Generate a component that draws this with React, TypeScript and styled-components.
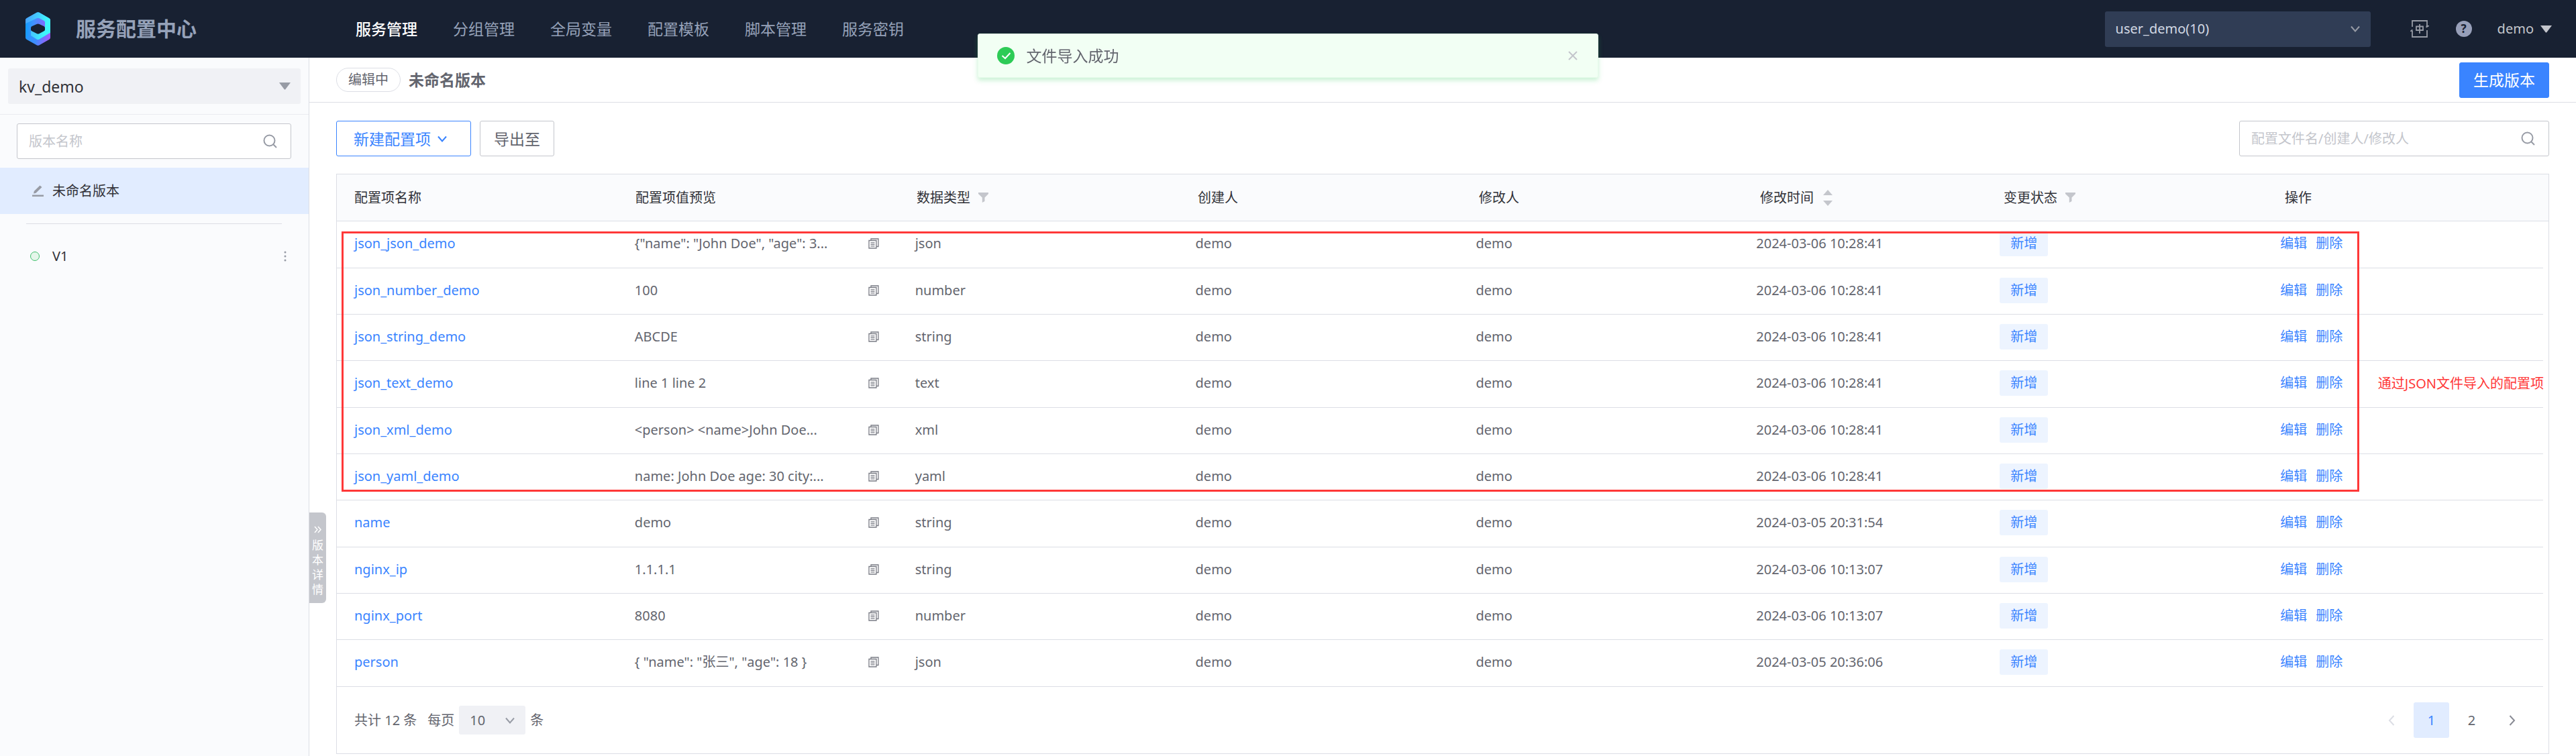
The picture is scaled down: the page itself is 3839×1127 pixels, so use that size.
import React from 'react';
import styled, { createGlobalStyle, css } from 'styled-components';

const GlobalStyle = createGlobalStyle`
  *, *::before, *::after { box-sizing: border-box; }
  body {
    margin: 0;
    background: #ffffff;
    color: #63656e;
    font-family: "Noto Sans", "Noto Sans CJK SC", sans-serif;
    font-size: 20px;
    line-height: 30px;
  }
  button, input, select { font: inherit; color: inherit; margin: 0; }
  button { cursor: pointer; background: none; border: 0; padding: 0; }
  a { text-decoration: none; }
  svg { display: block; flex: none; }
`;

const Page = styled.div`
  display: flex;
  flex-direction: column;
  min-height: 100vh;
`;

/* ---------- header ---------- */

const Header = styled.header`
  display: flex;
  align-items: center;
  height: 86px;
  padding: 0 36px 0 38px;
  background: #182132;
  color: #96a2b9;
`;

const Brand = styled.div`
  display: flex;
  align-items: center;
  gap: 38px;
  width: 492px;
`;

const BrandName = styled.h1`
  margin: 0;
  font-size: 30px;
  line-height: 40px;
  font-weight: 700;
`;

const Nav = styled.nav`
  display: flex;
  flex: 1;
  gap: 53px;
`;

const NavLink = styled.a<{ $active?: boolean }>`
  font-size: 23px;
  color: ${(p) => (p.$active ? '#ffffff' : '#96a2b9')};
  font-weight: ${(p) => (p.$active ? 500 : 400)};
`;

const HeaderTools = styled.div`
  display: flex;
  align-items: center;
`;

const IconButton = styled.button<{ $gap: number }>`
  display: flex;
  margin-left: ${(p) => p.$gap}px;
`;

const HelpBadge = styled.span`
  width: 24px;
  height: 24px;
  border-radius: 50%;
  background: #979fb9;
  color: #182132;
  font-size: 17px;
  line-height: 24px;
  font-weight: 700;
  text-align: center;
`;

const UserButton = styled.button`
  display: flex;
  align-items: center;
  gap: 10px;
  margin-left: 38px;
  color: #c4c6cc;
`;

/* ---------- selects and search boxes ---------- */

const SelectBox = styled.div<{ $kind: 'user' | 'app' | 'page' }>`
  display: grid;
  align-items: center;
  border-radius: 3px;

  > * { grid-area: 1 / 1; }
  > svg { justify-self: end; pointer-events: none; }
  > select {
    width: 100%;
    height: 100%;
    padding: 0 16px;
    border: 0;
    outline: 0;
    background: transparent;
    appearance: none;
  }

  ${(p) => p.$kind === 'user' && css`
    width: 396px;
    height: 53px;
    background: #303d55;
    color: #d3d9e4;
    > svg { margin-right: 15px; }
  `}
  ${(p) => p.$kind === 'app' && css`
    height: 53px;
    background: #f0f1f5;
    color: #313238;
    font-size: 23px;
    > svg { margin-right: 15px; }
  `}
  ${(p) => p.$kind === 'page' && css`
    width: 99px;
    height: 43px;
    background: #f0f1f5;
    > svg { margin-right: 15px; }
  `}
`;

const SearchBox = styled.label<{ $wide?: boolean }>`
  display: flex;
  align-items: center;
  height: 53px;
  width: ${(p) => (p.$wide ? '462px' : 'auto')};
  padding: 0 20px 0 17px;
  background: #ffffff;
  border: 1px solid #c4c6cc;
  border-radius: 3px;

  input {
    flex: 1;
    min-width: 0;
    padding: 0;
    border: 0;
    outline: 0;
    background: transparent;
  }
  input::placeholder { color: #c4c6cc; opacity: 1; }
`;

/* ---------- sidebar ---------- */

const Body = styled.div`
  display: flex;
  flex: 1;
`;

const Sidebar = styled.aside`
  width: 461px;
  flex: none;
  background: #fafbfd;
  border-right: 1px solid #dcdee5;
`;

const AppPicker = styled.div`
  padding: 16px 12px 15px;
  border-bottom: 1px solid #eaebf0;
`;

const VersionSearch = styled.div`
  padding: 13px 26px 13px 25px;
`;

const VersionItem = styled.a<{ $active?: boolean }>`
  display: flex;
  align-items: center;
  height: 69px;
  padding: 0 33px 0 45px;
  gap: 12px;
  color: #313238;
  background: ${(p) => (p.$active ? '#e1ecff' : 'transparent')};

  > span:nth-of-type(2) { flex: 1; }
`;

const VersionMark = styled.span`
  display: flex;
  width: 21px;
`;

const Dot = styled.i`
  width: 14px;
  height: 14px;
  border: 1px solid #3fc06d;
  border-radius: 50%;
  background: #e5f6ea;
`;

const VersionDivider = styled.hr`
  height: 1px;
  margin: 14px 40px 13px 39px;
  border: 0;
  background: #dcdee5;
`;

/* ---------- main ---------- */

const Main = styled.main`
  position: relative;
  flex: 1;
  min-width: 0;
`;

const DetailTab = styled.button`
  position: absolute;
  left: 0;
  top: 678px;
  display: flex;
  flex-direction: column;
  align-items: center;
  width: 25px;
  height: 135px;
  padding-top: 20px;
  gap: 7px;
  border-radius: 0 6px 6px 0;
  background: #c4c6cc;
  color: #ffffff;
  font-size: 17px;
  line-height: 22px;

  span { width: 17px; }
`;

const VersionHeader = styled.div`
  display: flex;
  align-items: center;
  height: 67px;
  padding: 0 40px;
  border-bottom: 1px solid #dcdee5;
`;

const StatusTag = styled.span`
  height: 36px;
  padding: 0 17px;
  border: 1px solid #dcdee5;
  border-radius: 18px;
  line-height: 34px;
`;

const VersionTitle = styled.h2`
  flex: 1;
  margin: 0 0 0 12px;
  font-size: 23px;
  line-height: 30px;
  font-weight: 700;
`;

const Button = styled.button<{ $kind?: 'primary' | 'outline' }>`
  display: flex;
  align-items: center;
  height: 53px;
  padding: 0 20px;
  border: 1px solid #c4c6cc;
  border-radius: 3px;
  font-size: 23px;

  ${(p) => p.$kind === 'primary' && css`
    border-color: #3a84ff;
    background: #3a84ff;
    color: #ffffff;
  `}
  ${(p) => p.$kind === 'outline' && css`
    gap: 9px;
    padding: 0 34px 0 25px;
    border-color: #3a84ff;
    color: #3a84ff;
  `}
`;

const Toolbar = styled.div`
  display: flex;
  gap: 13px;
  padding: 27px 40px 26px;

  > label { margin-left: auto; }
`;

const TablePanel = styled.section`
  position: relative;
  margin: 0 40px;
  border: 1px solid #dcdee5;
`;

const Table = styled.table`
  display: block;

  thead, tbody { display: block; }
  tbody { padding-right: 8px; }
  tr {
    display: grid;
    grid-template-columns: repeat(5, minmax(0, 1fr)) 363px repeat(2, minmax(0, 1fr));
    align-items: center;
    border-bottom: 1px solid #dcdee5;
  }
  thead tr { height: 70px; background: #fafbfd; }
  tbody tr { height: 69px; }
  tbody tr:nth-child(3n + 1) { height: 70px; }
  th, td {
    display: flex;
    align-items: center;
    padding: 0 28px 0 26px;
    text-align: left;
    white-space: nowrap;
  }
  td { padding-bottom: 3px; }
  th { gap: 12px; color: #313238; font-weight: 400; }
`;

const CellLink = styled.a`
  color: #3a84ff;
`;

const Preview = styled.span`
  flex: 1;
`;

const ChangeTag = styled.span`
  padding: 0 16px;
  border-radius: 3px;
  background: #edf4ff;
  color: #3a84ff;
  line-height: 38px;
`;

const Actions = styled.div`
  display: flex;
  gap: 13px;
`;

const Pager = styled.footer`
  display: flex;
  align-items: center;
  height: 99px;
  padding: 0 28px 0 26px;
`;

const PageSize = styled.label`
  display: flex;
  align-items: center;
  flex: 1;
  gap: 7px;
  margin-left: 16px;
`;

const PageNav = styled.nav`
  display: flex;
  gap: 7px;
`;

const PageButton = styled.button<{ $active?: boolean }>`
  display: flex;
  align-items: center;
  justify-content: center;
  width: 53px;
  height: 53px;
  border-radius: 3px;
  background: ${(p) => (p.$active ? '#e1ecff' : 'transparent')};
  color: ${(p) => (p.$active ? '#3a84ff' : '#63656e')};
`;

/* ---------- overlays ---------- */

const Annotation = styled.div`
  position: absolute;
  top: 85px;
  left: 7px;
  right: 7px;
  height: 388px;
  display: flex;
  align-items: center;
  gap: 28px;
  color: #ff3838;
  pointer-events: none;
`;

const AnnotationFrame = styled.div`
  flex: 1;
  height: 100%;
  border: 3px solid #ff3838;
`;

const AnnotationText = styled.span`
  padding-top: 66px;
  white-space: nowrap;
`;

const Toast = styled.div`
  position: fixed;
  top: 50px;
  left: 50%;
  width: 925px;
  margin-left: -463px;
  height: 66px;
  display: flex;
  align-items: center;
  gap: 18px;
  padding: 0 30px 0 28px;
  border: 1px solid #e6fbea;
  border-radius: 3px;
  background: #f2fff4;
  box-shadow: 0 4px 7px rgba(45, 203, 86, 0.25);
  font-size: 23px;

  > span { flex: 1; }
`;

/* ---------- icons ---------- */

const Logo = () => (
  <svg width="37" height="50" viewBox="0 0 111 150" aria-hidden="true">
    <defs>
      <linearGradient id="base" x1="0" y1="0.4" x2="1" y2="0.7">
        <stop offset="0" stopColor="#1a9bff" />
        <stop offset="0.5" stopColor="#3f8dff" />
        <stop offset="1" stopColor="#a35cff" />
      </linearGradient>
      <linearGradient id="ring" x1="0" y1="0" x2="1" y2="0.25">
        <stop offset="0" stopColor="#4a9cff" />
        <stop offset="0.9" stopColor="#3ff6fb" />
      </linearGradient>
      <linearGradient id="band" x1="0" y1="0" x2="1" y2="0">
        <stop offset="0" stopColor="#129cff" />
        <stop offset="0.4" stopColor="#3f93ff" />
        <stop offset="1" stopColor="#7f6cff" />
      </linearGradient>
    </defs>
    <path d="M50 2Q56-1 62 2L105 27Q111 30 111 36V114Q111 120 105 123L62 148Q56 151 50 148L6 123Q0 120 0 114V36Q0 30 6 27Z" fill="url(#base)" />
    <path d="M50 2Q56-1 62 2L105 27Q111 30 111 36V92L60 122Q56 124 51 122L24 105V60L0 52V36Q0 30 6 27Z" fill="url(#ring)" />
    <path d="M0 52L50 28Q56 25 62 28L83 39Q87 41 87 46V72L56 60L24 68V105L0 110Z" fill="url(#band)" />
    <path d="M50 54Q56 51 62 54L83 64Q87 67 87 71V79Q87 83 83 85L62 96Q56 99 50 96L28 85Q24 83 24 79V71Q24 67 28 64Z" fill="#182132" />
  </svg>
);

const Chevron = ({ size = 16, color = '#979ba5', width = 2 }) => (
  <svg width={size} height={size} viewBox="0 0 16 16" fill="none" stroke={color} strokeWidth={width} aria-hidden="true">
    <path d="M2 4.500L8 11.500L14 4.500" />
  </svg>
);

const Triangle = ({ color }: { color: string }) => (
  <svg width="17" height="11" viewBox="0 0 17 11" fill={color} aria-hidden="true">
    <path d="M0 0H17L9.500 10Q8.500 11 7.500 10Z" />
  </svg>
);

const SearchIcon = () => (
  <svg width="21" height="21" viewBox="0 0 21 21" fill="none" stroke="#979ba5" strokeWidth="2" aria-hidden="true">
    <circle cx="9.500" cy="9.500" r="8" />
    <path d="M15 15L20 20" />
  </svg>
);

const LangIcon = () => (
  <svg width="28" height="26" viewBox="0 0 28 26" fill="none" stroke="#979ba5" strokeWidth="1.800" aria-hidden="true">
    <path d="M3 10V1H25V9M25 15V25H3V16" />
    <path d="M24 11L28 8.500L24 8.500ZM3 14L0 16.500L3 16.500Z" fill="#979ba5" strokeWidth="1" />
    <path d="M9 9.500H19V15H9ZM14 6V20" />
  </svg>
);

const EditIcon = () => (
  <svg width="21" height="17" viewBox="-3 0 21 17" fill="#979ba5" aria-hidden="true">
    <path d="M0 14.500H17V17H0ZM2 12.500L2.800 9L11.500 0.500L14.500 3L5.500 11.800Z" />
  </svg>
);

const MoreIcon = () => (
  <svg width="4" height="16" viewBox="0 0 4 16" fill="#979ba5" aria-hidden="true">
    <circle cx="2" cy="2" r="1.500" /><circle cx="2" cy="8" r="1.500" /><circle cx="2" cy="14" r="1.500" />
  </svg>
);

const FilterIcon = () => (
  <svg width="15" height="15" viewBox="0 0 15 15" fill="#c4c6cc" aria-hidden="true">
    <path d="M0 0H15V2L9.500 7.500V13L5.800 15V7.500L0 2Z" />
  </svg>
);

const SortIcon = () => (
  <svg width="16" height="24" viewBox="-2 0 16 24" fill="#c4c6cc" aria-hidden="true">
    <path d="M7 0L14 8H0ZM7 24L14 16H0Z" />
  </svg>
);

const CopyIcon = () => (
  <svg width="16" height="16" viewBox="0 0 16 16" fill="none" stroke="#7a7c85" strokeWidth="1.300" aria-hidden="true">
    <path d="M1 3.500H12V15H1ZM4 3.500V1H15V12.500H12M3.500 6.800H9.500M3.500 9.300H9.500M3.500 11.800H9.500" />
  </svg>
);

const PageArrow = ({ next }: { next?: boolean }) => (
  <svg width="10" height="16" viewBox="0 0 10 16" fill="none" stroke={next ? '#8a8c95' : '#dcdee5'} strokeWidth="2" aria-hidden="true">
    <path d={next ? 'M1.500 1L8 8L1.500 15' : 'M8.500 1L2 8L8.500 15'} />
  </svg>
);

const CheckIcon = () => (
  <svg width="26" height="26" viewBox="0 0 26 26" fill="none" aria-hidden="true">
    <circle cx="13" cy="13" r="13" fill="#2dcb56" />
    <path d="M7.500 13L12 17L19.500 9" stroke="#ffffff" strokeWidth="2" />
  </svg>
);

const CloseIcon = () => (
  <svg width="14" height="14" viewBox="0 0 14 14" stroke="#c4c6cc" strokeWidth="2" aria-hidden="true">
    <path d="M1 1L13 13M13 1L1 13" />
  </svg>
);

const DoubleArrow = () => (
  <svg width="11" height="11" viewBox="0 0 11 11" fill="none" stroke="#ffffff" strokeWidth="1.500" aria-hidden="true">
    <path d="M1 1L5 5.500L1 10M6 1L10 5.500L6 10" />
  </svg>
);

/* ---------- data ---------- */

const navItems = ['服务管理', '分组管理', '全局变量', '配置模板', '脚本管理', '服务密钥'];

const rows = [
  ['json_json_demo', '{"name": "John Doe", "age": 3...', 'json', '2024-03-06 10:28:41'],
  ['json_number_demo', '100', 'number', '2024-03-06 10:28:41'],
  ['json_string_demo', 'ABCDE', 'string', '2024-03-06 10:28:41'],
  ['json_text_demo', 'line 1 line 2', 'text', '2024-03-06 10:28:41'],
  ['json_xml_demo', '<person> <name>John Doe...', 'xml', '2024-03-06 10:28:41'],
  ['json_yaml_demo', 'name: John Doe age: 30 city:...', 'yaml', '2024-03-06 10:28:41'],
  ['name', 'demo', 'string', '2024-03-05 20:31:54'],
  ['nginx_ip', '1.1.1.1', 'string', '2024-03-06 10:13:07'],
  ['nginx_port', '8080', 'number', '2024-03-06 10:13:07'],
  ['person', '{ "name": "张三", "age": 18 }', 'json', '2024-03-05 20:36:06'],
];

export default function App() {
  return (
    <Page>
      <GlobalStyle />
      <Header>
        <Brand>
          <Logo />
          <BrandName>服务配置中心</BrandName>
        </Brand>
        <Nav>
          {navItems.map((item, i) => (
            <NavLink key={item} href="#" $active={i === 0}>{item}</NavLink>
          ))}
        </Nav>
        <HeaderTools>
          <SelectBox $kind="user">
            <select aria-label="业务">
              <option>user_demo(10)</option>
            </select>
            <Chevron color="#979ba5" />
          </SelectBox>
          <IconButton $gap={59} aria-label="语言"><LangIcon /></IconButton>
          <IconButton $gap={40} aria-label="帮助"><HelpBadge>?</HelpBadge></IconButton>
          <UserButton>demo<Triangle color="#c4c6cc" /></UserButton>
        </HeaderTools>
      </Header>

      <Body>
        <Sidebar>
          <AppPicker>
            <SelectBox $kind="app">
              <select aria-label="服务">
                <option>kv_demo</option>
              </select>
              <Triangle color="#979ba5" />
            </SelectBox>
          </AppPicker>
          <VersionSearch>
            <SearchBox>
              <input aria-label="版本名称" placeholder="版本名称" />
              <SearchIcon />
            </SearchBox>
          </VersionSearch>
          <VersionItem href="#" $active>
            <VersionMark><EditIcon /></VersionMark>
            <span>未命名版本</span>
          </VersionItem>
          <VersionDivider />
          <VersionItem href="#">
            <VersionMark><Dot /></VersionMark>
            <span>V1</span>
            <MoreIcon />
          </VersionItem>
        </Sidebar>

        <Main>
          <VersionHeader>
            <StatusTag>编辑中</StatusTag>
            <VersionTitle>未命名版本</VersionTitle>
            <Button $kind="primary">生成版本</Button>
          </VersionHeader>
          <Toolbar>
            <Button $kind="outline">新建配置项<Chevron color="#3a84ff" /></Button>
            <Button>导出至</Button>
            <SearchBox $wide>
              <input aria-label="搜索" placeholder="配置文件名/创建人/修改人" />
              <SearchIcon />
            </SearchBox>
          </Toolbar>

          <TablePanel>
            <Table>
              <thead>
                <tr>
                  <th>配置项名称</th>
                  <th>配置项值预览</th>
                  <th>数据类型<FilterIcon /></th>
                  <th>创建人</th>
                  <th>修改人</th>
                  <th>修改时间<SortIcon /></th>
                  <th>变更状态<FilterIcon /></th>
                  <th>操作</th>
                </tr>
              </thead>
              <tbody>
                {rows.map(([name, preview, type, time]) => (
                  <tr key={name}>
                    <td><CellLink href="#">{name}</CellLink></td>
                    <td><Preview>{preview}</Preview><CopyIcon /></td>
                    <td>{type}</td>
                    <td>demo</td>
                    <td>demo</td>
                    <td>{time}</td>
                    <td><ChangeTag>新增</ChangeTag></td>
                    <td>
                      <Actions>
                        <CellLink href="#">编辑</CellLink>
                        <CellLink href="#">删除</CellLink>
                      </Actions>
                    </td>
                  </tr>
                ))}
              </tbody>
            </Table>
            <Pager>
              <span>共计 12 条</span>
              <PageSize>
                每页
                <SelectBox $kind="page">
                  <select>
                    <option>10</option>
                  </select>
                  <Chevron />
                </SelectBox>
                条
              </PageSize>
              <PageNav>
                <PageButton aria-label="上一页"><PageArrow /></PageButton>
                <PageButton $active>1</PageButton>
                <PageButton>2</PageButton>
                <PageButton aria-label="下一页"><PageArrow next /></PageButton>
              </PageNav>
            </Pager>
            <Annotation>
              <AnnotationFrame />
              <AnnotationText>通过JSON文件导入的配置项</AnnotationText>
            </Annotation>
          </TablePanel>
          <DetailTab>
            <DoubleArrow />
            <span>版本详情</span>
          </DetailTab>
        </Main>
      </Body>

      <Toast role="status">
        <CheckIcon />
        <span>文件导入成功</span>
        <button aria-label="关闭"><CloseIcon /></button>
      </Toast>
    </Page>
  );
}
